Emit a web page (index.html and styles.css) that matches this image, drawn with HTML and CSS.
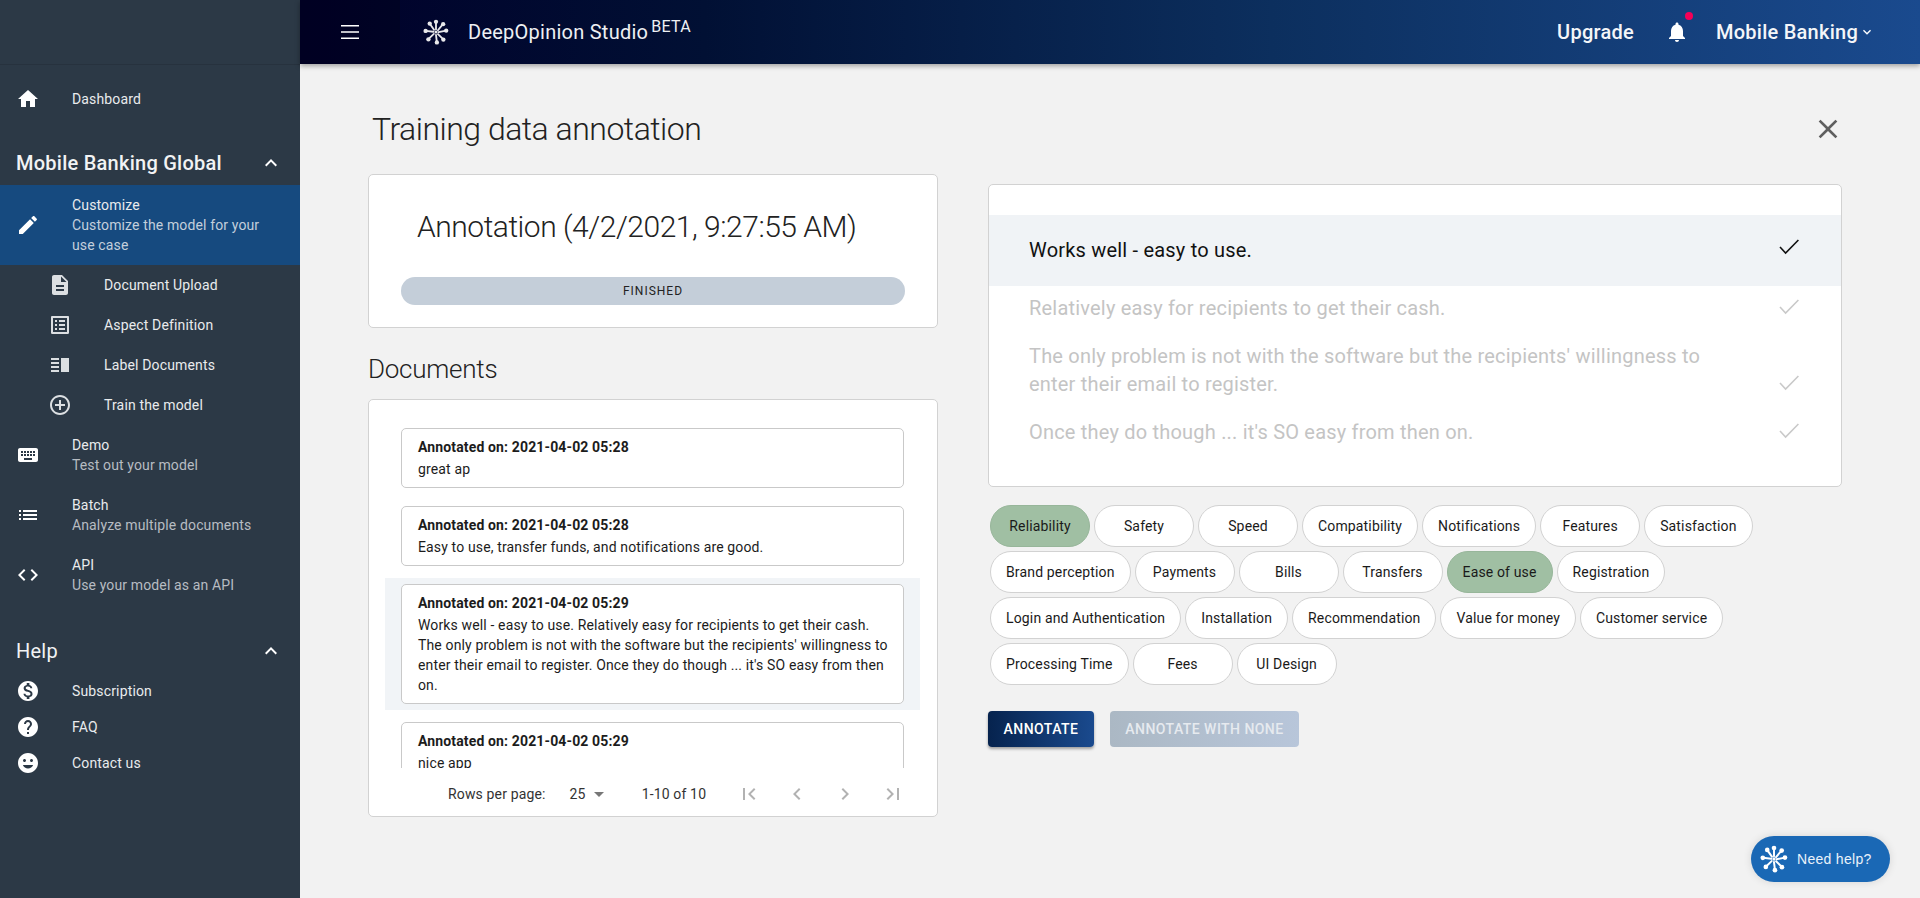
FILE: index.html
```html
<!DOCTYPE html>
<html lang="en">
<head>
<meta charset="utf-8">
<title>DeepOpinion Studio</title>
<link rel="stylesheet" href="styles.css">
</head>
<body>
<svg class="defs" width="0" height="0" aria-hidden="true">
  <symbol id="logo" viewBox="0 0 24 24">
    <g stroke="currentColor" stroke-width="1.7" stroke-linecap="round">
      <path d="M12 9.6V3M13.8 10.4 18 5.2M14.4 12.2l7-1.4M13.8 14l4.8 4.6M12 14.6l.8 6.8M10 13.8l-4.8 4.6M9.6 11.8l-7-.8M10.2 10 6.4 4.6"/>
    </g>
    <g fill="currentColor">
      <circle cx="12" cy="2.6" r="2"/><circle cx="18.6" cy="4.8" r="2"/><circle cx="21.4" cy="10.8" r="2"/><circle cx="18.8" cy="19" r="2"/><circle cx="12.8" cy="21.6" r="2"/><circle cx="5" cy="18.8" r="2"/><circle cx="2.4" cy="11" r="2"/><circle cx="6.2" cy="4.2" r="2"/><circle cx="12" cy="12" r="1.4"/>
    </g>
  </symbol>
  <symbol id="check" viewBox="0 0 20 16"><path d="M1 8 6.6 14 19.4 1" fill="none" stroke="currentColor" stroke-width="1.6"/></symbol>
</svg>
<div class="app">
  <aside class="sidebar">
    <div class="side-top"></div>
    <nav class="side-nav">
      <a class="nav-row single dash">
        <svg class="ico" viewBox="0 0 24 24"><path d="M10 20v-6h4v6h5v-8h3L12 3 2 12h3v8z"/></svg>
        <span class="nav-title">Dashboard</span>
      </a>
      <div class="section-head first"><span>Mobile Banking Global</span><svg class="ico chev" viewBox="0 0 24 24"><path d="M12 8l-6 6 1.41 1.41L12 10.83l4.59 4.58L18 14z"/></svg></div>
      <a class="nav-row active">
        <svg class="ico" viewBox="0 0 24 24"><path d="M3 17.25V21h3.75L17.81 9.94l-3.75-3.75L3 17.25zM20.71 7.04c.39-.39.39-1.02 0-1.41l-2.34-2.34c-.39-.39-1.02-.39-1.41 0l-1.83 1.83 3.75 3.75 1.83-1.83z"/></svg>
        <span class="nav-text"><span class="nav-title">Customize</span><span class="nav-sub">Customize the model for your use case</span></span>
      </a>
      <a class="sub-row">
        <svg class="ico" viewBox="0 0 24 24"><path d="M14 2H6c-1.1 0-1.99.9-1.99 2L4 20c0 1.1.89 2 1.99 2H18c1.1 0 2-.9 2-2V8l-6-6zm2 16H8v-2h8v2zm0-4H8v-2h8v2zm-3-5V3.5L18.5 9H13z"/></svg>
        <span class="nav-title">Document Upload</span>
      </a>
      <a class="sub-row">
        <svg class="ico" viewBox="0 0 24 24"><path d="M19 5v14H5V5h14m1.1-2H3.9c-.5 0-.9.4-.9.9v16.2c0 .4.4.9.9.9h16.2c.4 0 .9-.5.9-.9V3.9c0-.5-.5-.9-.9-.9zM11 7h6v2h-6V7zm0 4h6v2h-6v-2zm0 4h6v2h-6zM7 7h2v2H7zm0 4h2v2H7zm0 4h2v2H7z"/></svg>
        <span class="nav-title">Aspect Definition</span>
      </a>
      <a class="sub-row">
        <svg class="ico" viewBox="0 0 24 24"><path d="M3 15h8v-2H3v2zm0 4h8v-2H3v2zm0-8h8V9H3v2zm0-6v2h8V5H3zm10 0h8v14h-8V5z"/></svg>
        <span class="nav-title">Label Documents</span>
      </a>
      <a class="sub-row">
        <svg class="ico" viewBox="0 0 24 24"><path d="M13 7h-2v4H7v2h4v4h2v-4h4v-2h-4V7zm-1-5C6.48 2 2 6.48 2 12s4.48 10 10 10 10-4.48 10-10S17.52 2 12 2zm0 18c-4.41 0-8-3.59-8-8s3.59-8 8-8 8 3.59 8 8-3.59 8-8 8z"/></svg>
        <span class="nav-title">Train the model</span>
      </a>
      <a class="nav-row">
        <svg class="ico" viewBox="0 0 24 24"><path d="M20 5H4c-1.1 0-1.99.9-1.99 2L2 17c0 1.1.9 2 2 2h16c1.1 0 2-.9 2-2V7c0-1.1-.9-2-2-2zm-9 3h2v2h-2V8zm0 3h2v2h-2v-2zM8 8h2v2H8V8zm0 3h2v2H8v-2zm-1 2H5v-2h2v2zm0-3H5V8h2v2zm9 7H8v-2h8v2zm0-4h-2v-2h2v2zm0-3h-2V8h2v2zm3 3h-2v-2h2v2zm0-3h-2V8h2v2z"/></svg>
        <span class="nav-text"><span class="nav-title">Demo</span><span class="nav-sub">Test out your model</span></span>
      </a>
      <a class="nav-row">
        <svg class="ico" viewBox="0 0 24 24"><path d="M3 13h2v-2H3v2zm0 4h2v-2H3v2zm0-8h2V7H3v2zm4 4h14v-2H7v2zm0 4h14v-2H7v2zM7 7v2h14V7H7z"/></svg>
        <span class="nav-text"><span class="nav-title">Batch</span><span class="nav-sub">Analyze multiple documents</span></span>
      </a>
      <a class="nav-row">
        <svg class="ico" viewBox="0 0 24 24"><path d="M9.4 16.6L4.8 12l4.6-4.6L8 6l-6 6 6 6 1.4-1.4zm5.2 0l4.6-4.6-4.6-4.6L16 6l6 6-6 6-1.4-1.4z"/></svg>
        <span class="nav-text"><span class="nav-title">API</span><span class="nav-sub">Use your model as an API</span></span>
      </a>
      <div class="section-head help"><span>Help</span><svg class="ico chev" viewBox="0 0 24 24"><path d="M12 8l-6 6 1.41 1.41L12 10.83l4.59 4.58L18 14z"/></svg></div>
      <a class="nav-row compact">
        <svg class="ico" viewBox="0 0 24 24"><path d="M12 2C6.48 2 2 6.48 2 12s4.48 10 10 10 10-4.48 10-10S17.52 2 12 2zm1.41 16.09V20h-2.67v-1.93c-1.71-.36-3.16-1.46-3.27-3.4h1.96c.1 1.05.82 1.87 2.65 1.87 1.96 0 2.4-.98 2.4-1.59 0-.83-.44-1.61-2.67-2.14-2.48-.6-4.18-1.62-4.18-3.67 0-1.72 1.39-2.84 3.11-3.21V4h2.67v1.95c1.86.45 2.79 1.86 2.87 3.39H14.3c-.05-1.11-.64-1.87-2.22-1.87-1.5 0-2.4.68-2.4 1.64 0 .84.65 1.39 2.67 1.91s4.18 1.39 4.18 3.91c-.01 1.83-1.38 2.83-3.12 3.16z"/></svg>
        <span class="nav-title">Subscription</span>
      </a>
      <a class="nav-row compact">
        <svg class="ico" viewBox="0 0 24 24"><path d="M12 2C6.48 2 2 6.48 2 12s4.48 10 10 10 10-4.48 10-10S17.52 2 12 2zm1 17h-2v-2h2v2zm2.07-7.75l-.9.92C13.45 12.9 13 13.5 13 15h-2v-.5c0-1.1.45-2.1 1.17-2.83l1.24-1.26c.37-.36.59-.86.59-1.41 0-1.1-.9-2-2-2s-2 .9-2 2H8c0-2.21 1.79-4 4-4s4 1.79 4 4c0 .88-.36 1.68-.93 2.25z"/></svg>
        <span class="nav-title">FAQ</span>
      </a>
      <a class="nav-row compact">
        <svg class="ico" viewBox="0 0 24 24"><path d="M11.99 2C6.47 2 2 6.48 2 12s4.47 10 9.99 10C17.52 22 22 17.52 22 12S17.52 2 11.99 2zM15.5 8c.83 0 1.5.67 1.5 1.5s-.67 1.5-1.5 1.5-1.5-.67-1.5-1.5.67-1.5 1.5-1.5zm-7 0c.83 0 1.5.67 1.5 1.5S9.33 11 8.5 11 7 10.33 7 9.5 7.67 8 8.5 8zm3.5 9.5c-2.33 0-4.31-1.46-5.11-3.5h10.22c-.8 2.04-2.78 3.5-5.11 3.5z"/></svg>
        <span class="nav-title">Contact us</span>
      </a>
    </nav>
  </aside>
  <div class="right">
    <header class="topbar">
      <div class="menu-cell"><svg class="menu-ico" viewBox="0 0 18 14"><path d="M0 0h18v1.6H0zM0 6.2h18v1.6H0zM0 12.4h18V14H0z"/></svg></div>
      <svg class="brand-logo"><use href="#logo"/></svg>
      <div class="brand">DeepOpinion Studio<sup class="beta">BETA</sup></div>
      <div class="top-actions">
        <span class="upgrade">Upgrade</span>
        <span class="bell"><svg viewBox="0 0 24 24"><path d="M12 22c1.1 0 2-.9 2-2h-4c0 1.1.89 2 2 2zm6-6v-5c0-3.07-1.64-5.64-4.5-6.32V4c0-.83-.67-1.5-1.5-1.5s-1.5.67-1.5 1.5v.68C7.63 5.36 6 7.92 6 11v5l-2 2v1h16v-1l-2-2z"/></svg><i class="dot"></i></span>
        <span class="account">Mobile Banking</span>
        <svg class="acc-chev" viewBox="0 0 24 24"><path d="M16.59 8.59L12 13.17 7.41 8.59 6 10l6 6 6-6z"/></svg>
      </div>
    </header>
    <main class="content">
      <div class="title-row">
        <h1>Training data annotation</h1>
        <svg class="close" viewBox="0 0 24 24"><path d="M19 6.41L17.59 5 12 10.59 6.41 5 5 6.41 10.59 12 5 17.59 6.41 19 12 13.41 17.59 19 19 17.59 13.41 12z"/></svg>
      </div>
      <div class="cols">
        <section class="left-col">
          <div class="card status-card">
            <h2>Annotation (4/2/2021, 9:27:55 AM)</h2>
            <div class="status-pill">FINISHED</div>
          </div>
          <h3>Documents</h3>
          <div class="card docs-card">
            <div class="doc-list">
              <div class="doc-row"><div class="doc"><b>Annotated on: 2021-04-02 05:28</b><p>great ap</p></div></div>
              <div class="doc-row"><div class="doc"><b>Annotated on: 2021-04-02 05:28</b><p>Easy to use, transfer funds, and notifications are good.</p></div></div>
              <div class="doc-row current"><div class="doc"><b>Annotated on: 2021-04-02 05:29</b><p>Works well - easy to use. Relatively easy for recipients to get their cash. The only problem is not with the software but the recipients' willingness to enter their email to register. Once they do though ... it's SO easy from then on.</p></div></div>
              <div class="doc-row"><div class="doc"><b>Annotated on: 2021-04-02 05:29</b><p>nice app</p></div></div>
            </div>
            <div class="pager">
              <span class="rows-label">Rows per page:</span>
              <span class="rows-val">25</span><i class="caret"></i>
              <span class="range">1-10 of 10</span>
              <span class="pg-btns">
                <svg viewBox="0 0 24 24"><path d="M18.41 16.59L13.82 12l4.59-4.59L17 6l-6 6 6 6zM6 6h2v12H6z"/></svg>
                <svg viewBox="0 0 24 24"><path d="M15.41 7.41L14 6l-6 6 6 6 1.41-1.41L10.83 12z"/></svg>
                <svg viewBox="0 0 24 24"><path d="M10 6L8.59 7.41 13.17 12l-4.58 4.59L10 18l6-6z"/></svg>
                <svg viewBox="0 0 24 24"><path d="M5.59 7.41L10.18 12l-4.59 4.59L7 18l6-6-6-6zM16 6h2v12h-2z"/></svg>
              </span>
            </div>
          </div>
        </section>
        <section class="right-col">
          <div class="card sent-card">
            <div class="sent on"><span>Works well - easy to use.</span><svg class="tick"><use href="#check"/></svg></div>
            <div class="sent"><span>Relatively easy for recipients to get their cash.</span><svg class="tick"><use href="#check"/></svg></div>
            <div class="sent"><span>The only problem is not with the software but the recipients' willingness to enter their email to register.</span><svg class="tick"><use href="#check"/></svg></div>
            <div class="sent"><span>Once they do though ... it's SO easy from then on.</span><svg class="tick"><use href="#check"/></svg></div>
          </div>
          <div class="chips">
            <span class="chip sel">Reliability</span><span class="chip">Safety</span><span class="chip">Speed</span><span class="chip">Compatibility</span><span class="chip">Notifications</span><span class="chip">Features</span><span class="chip">Satisfaction</span><span class="chip">Brand perception</span><span class="chip">Payments</span><span class="chip">Bills</span><span class="chip">Transfers</span><span class="chip sel">Ease of use</span><span class="chip">Registration</span><span class="chip">Login and Authentication</span><span class="chip">Installation</span><span class="chip">Recommendation</span><span class="chip">Value for money</span><span class="chip">Customer service</span><span class="chip">Processing Time</span><span class="chip">Fees</span><span class="chip">UI Design</span>
          </div>
          <div class="actions">
            <button class="btn primary">ANNOTATE</button>
            <button class="btn muted">ANNOTATE WITH NONE</button>
          </div>
        </section>
      </div>
      <div class="help-btn"><svg class="help-logo"><use href="#logo"/></svg><span>Need help?</span></div>
    </main>
  </div>
</div>
</body>
</html>
```
FILE: styles.css
```css
* { box-sizing: border-box; }
html, body { margin: 0; height: 100%; }
body {
  font-family: Roboto, "Liberation Sans", sans-serif;
  font-size: 14px;
  background: #f2f2f2;
  overflow: hidden;
  letter-spacing: 0.15px;
  color: #1c1c1c;
}
.defs { position: absolute; }
.app { display: flex; height: 898px; }

/* Sidebar */
.sidebar { width: 300px; flex: none; background: #2c3946; color: #fff; }
.side-top { height: 65px; border-bottom: 1px solid #27323e; }
.side-nav { display: flex; flex-direction: column; }
.ico { width: 24px; height: 24px; fill: #fff; flex: none; }
.nav-row { display: flex; align-items: center; padding: 0 16px; height: 60px; }
.nav-row > .ico { margin-right: 32px; }
.nav-row.dash { height: 68px; }
.nav-row.compact { height: 36px; }
.nav-text { display: flex; flex-direction: column; }
.nav-title { line-height: 20px; color: #e9ebed; letter-spacing: 0.15px; }
.nav-sub { line-height: 20px; color: #b7bcc2; letter-spacing: 0.13px; }
.nav-row.active { background: #164a7f; height: 80px; padding-right: 30px; }
.nav-row.active .nav-sub { color: #c3cfdc; }
.section-head {
  display: flex; justify-content: space-between; align-items: center;
  padding: 0 16px; height: 52px;
  font-size: 20px; font-weight: 500; letter-spacing: 0.25px;
  color: #f2f3f4;
}
.section-head.first { padding-top: 8px; }
.section-head.help { height: 50px; margin-top: 21px; margin-bottom: -3px; font-weight: 400; }
.chev { margin-right: 1px; }
.sub-row { display: flex; align-items: center; height: 40px; padding-left: 48px; }
.sub-row .ico { fill: #dcdfe2; margin-right: 32px; }

/* Top bar */
.right { flex: 1; min-width: 0; display: flex; flex-direction: column; }
.topbar {
  height: 64px; flex: none; display: flex; align-items: center; color: #fff;
  background: linear-gradient(90deg, #00002a 0%, #011034 25%, #0c2f5e 60%, #1a4a8e 100%);
  box-shadow: 0 2px 5px rgba(0,0,0,.35);
  position: relative; z-index: 2;
}
.menu-cell { width: 100px; height: 64px; display: flex; align-items: center; justify-content: center; background: rgba(0,0,0,.18); }
.menu-ico { width: 18px; height: 14px; fill: #fff; }
.brand-logo { width: 26px; height: 26px; color: #e8e8ea; margin: 0 19px 0 23px; }
.brand { font-size: 20px; letter-spacing: 0.25px; color: #eef0f3; }
.beta { font-size: 16px; margin-left: 3px; line-height: 0; position: relative; top: 1px; vertical-align: super; }
.top-actions { margin-left: auto; display: flex; align-items: center; padding-right: 45px; font-size: 20px; font-weight: 500; letter-spacing: 0.25px; color: #f4f6f9; }
.bell { position: relative; width: 24px; height: 24px; margin: 0 27px 0 31px; }
.bell svg { width: 24px; height: 24px; fill: #fff; display: block; }
.dot { position: absolute; width: 8px; height: 8px; border-radius: 50%; background: #f50057; top: -8px; right: -4px; }
.acc-chev { width: 16px; height: 16px; fill: #fff; margin-left: 1px; }

/* Content */
.content { flex: 1; padding: 45px 78px 0 68px; position: relative; }
.title-row { display: flex; justify-content: space-between; align-items: center; height: 40px; margin-bottom: 25px; padding-left: 4px; }
h1 { margin: 0; font-size: 32px; font-weight: 300; line-height: 40px; letter-spacing: -0.5px; color: #222; }
.close { width: 32px; height: 32px; fill: #5f5f5f; margin-right: -2px; }
.cols { display: flex; gap: 50px; align-items: flex-start; }
.left-col { width: 570px; flex: none; }
.right-col { flex: 1; min-width: 0; padding-top: 10px; }
.card { background: #fff; border: 1px solid #d2d2d2; border-radius: 5px; }

.status-card { height: 154px; padding: 32px 32px 0; }
h2 { margin: 0 0 30px 16px; font-size: 30px; font-weight: 300; line-height: 40px; letter-spacing: -0.48px; color: #222; white-space: nowrap; }
.status-pill { height: 28px; border-radius: 14px; background: #c4ced9; display: flex; align-items: center; justify-content: center; font-size: 12px; letter-spacing: 1px; color: #222; }
h3 { margin: 25px 0 14px; font-size: 26px; font-weight: 300; line-height: 32px; letter-spacing: -0.25px; color: #222; }
.docs-card { height: 418px; display: flex; flex-direction: column; }
.doc-list { height: 368px; overflow: hidden; padding: 22px 17px 0 16px; flex: none; display: flex; flex-direction: column; gap: 6px; }
.doc-row { padding: 6px 16px; flex: none; }
.doc-row.current { background: #f1f4f7; }
.doc { background: #fff; border: 1px solid #c9c9c9; border-radius: 5px; padding: 8px 14px 8px 16px; line-height: 20px; }
.doc b { display: block; font-weight: 700; letter-spacing: 0.14px; }
.doc p { margin: 2px 0 0; letter-spacing: 0.14px; }

.pager { flex: 1; display: flex; align-items: center; padding: 4px 0 0 79px; color: #333; }
.rows-val { margin-left: 24px; }
.caret { width: 0; height: 0; border: 5px solid transparent; border-top-color: #777; border-bottom: 0; margin-left: 8px; }
.range { margin-left: 38px; }
.pg-btns { display: flex; gap: 24px; margin-left: 31px; }
.pg-btns svg { width: 24px; height: 24px; fill: #b2b2b2; }

.sent-card { height: 303px; padding-top: 30px; }
.sent { display: flex; justify-content: space-between; align-items: flex-end; padding: 8px 42px 12px 40px; font-size: 20px; line-height: 28px; color: #c4c4c4; letter-spacing: 0.2px; }
.sent span { width: 690px; }
.sent.on { background: #f0f3f6; color: #111; height: 71px; padding-top: 21px; padding-bottom: 22px; }
.tick { width: 20px; height: 16px; flex: none; margin-bottom: 7px; color: #c9c9c9; }
.sent.on .tick { color: #111; margin-bottom: 9px; }

.chips { display: flex; flex-wrap: wrap; gap: 4px; padding: 18px 0 0 2px; }
.chip { height: 42px; min-width: 100px; padding: 0 15px; border: 1px solid #d2d2d2; border-radius: 21px; background: #fff; display: flex; align-items: center; justify-content: center; color: #1a1a1a; letter-spacing: 0.15px; }
.chip.sel { background: #a0bfa3; border-color: #97b69a; }
.actions { display: flex; gap: 16px; margin-top: 26px; }
.btn { height: 36px; border: 0; border-radius: 4px; padding: 0; font: 500 14px Roboto, sans-serif; letter-spacing: 0.45px; white-space: nowrap; }
.primary { width: 106px; color: #fff; background: linear-gradient(90deg, #06234e, #1a4a8e); box-shadow: 0 2px 3px rgba(0,0,0,.35); }
.muted { width: 189px; color: #e6eaef; background: linear-gradient(90deg, #abb8c4, #b8c6da); }

.help-btn { position: absolute; left: 1451px; top: 772px; width: 139px; height: 46px; border-radius: 23px; background: #1a68b5; color: #eaf2fa; display: flex; align-items: center; padding-left: 9px; font: 14px "Liberation Sans", sans-serif; letter-spacing: 0.3px; box-shadow: 0 0 8px rgba(0,0,0,.12); }
.help-logo { width: 28px; height: 28px; color: #fff; margin-right: 9px; }
```
